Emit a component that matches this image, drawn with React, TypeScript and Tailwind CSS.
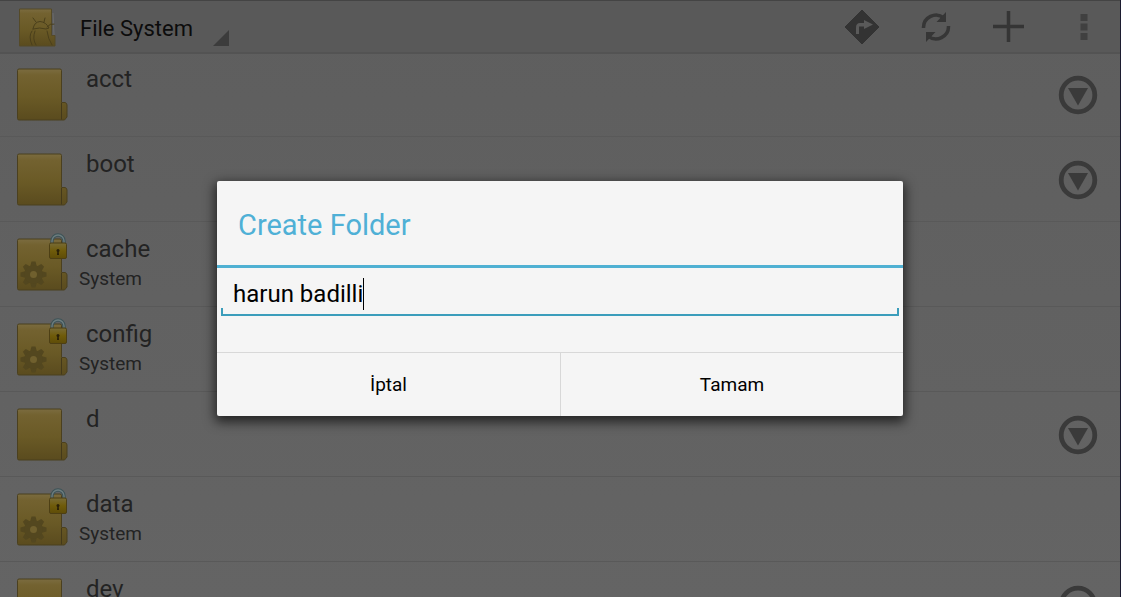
import { clsx } from "clsx";

type Folder = {
  name: string;
  system?: boolean;
};

const folders: Folder[] = [
  { name: "acct" },
  { name: "boot" },
  { name: "cache", system: true },
  { name: "config", system: true },
  { name: "d" },
  { name: "data", system: true },
  { name: "dev" },
];

const gearTeeth = [0, 45, 90, 135, 180, 225, 270, 315];

const Gear = () => (
  <g fill="#53471f">
    {gearTeeth.map((angle) => (
      <path key={angle} d="M14 31 L15.500 25.500 H19.500 L21 31 Z" transform={`rotate(${angle} 17.5 38.5)`} />
    ))}
    <circle cx="17.5" cy="38.5" r="9.200" />
    <circle cx="17.5" cy="38.5" r="3.500" fill="#70602e" />
  </g>
);

const Padlock = () => (
  <g transform="translate(0 1)">
    <path d="M36 10 V7 A6 6 0 0 1 48 7 V10" fill="none" stroke="#3d5357" strokeWidth="3.400" />
    <path d="M36 10 V7 A6 6 0 0 1 48 7 V10" fill="none" stroke="#6c7c7e" strokeWidth="1.400" />
    <rect x="33.500" y="9" width="17" height="15.500" rx="1.500" fill="url(#lockFill)" stroke="#4d3f14" />
    <circle cx="42" cy="16.500" r="1.500" fill="#2a2008" />
    <path d="M41.300 17 H42.700 L43 21 H41 Z" fill="#2a2008" />
  </g>
);

const FolderIcon = ({ system }: { system?: boolean }) => (
  <svg viewBox="0 0 52 60" className="h-15 w-13 shrink-0" aria-hidden="true">
    <defs>
      <linearGradient id="folderFill" x1="0" y1="0" x2="0" y2="1">
        <stop offset="0" stopColor="#7b6c40" />
        <stop offset="0.120" stopColor="#736230" />
        <stop offset="0.550" stopColor="#6a5a26" />
        <stop offset="1" stopColor="#5a4b1e" />
      </linearGradient>
      <linearGradient id="lockFill" x1="0" y1="0" x2="0" y2="1">
        <stop offset="0" stopColor="#786b36" />
        <stop offset="0.500" stopColor="#6f5b0a" />
        <stop offset="1" stopColor="#5e4c08" />
      </linearGradient>
    </defs>
    <g transform="translate(0 3)">
      <path
        d="M1.500 4.500 Q1.500 3 3 3 H44 Q45.500 3 45.500 4.500 V36.500 H49 Q51 37 51 39 V51 L48.500 54 H3 Q1.500 54 1.500 52.500 Z"
        fill="url(#folderFill)"
        stroke="#4b401f"
      />
      <path d="M45.500 37 V53.500" stroke="#43391a" fill="none" />
      {system && <Gear />}
    </g>
    {system && <Padlock />}
  </svg>
);

const AppIcon = () => (
  <svg viewBox="0 0 40 40" className="h-10 w-10 shrink-0" aria-hidden="true">
    <path d="M3.500 2 H35.500 V28.500 H39 V39 H3.500 Z" fill="url(#folderFill)" stroke="#554a28" />
    <path d="M37 6 L38 28" stroke="#6c6c6c" />
    <g fill="none" stroke="#4a3f1b" strokeLinecap="round">
      <path d="M17 22 Q18 15 24 14.500 Q30 15 33 21 L30 22 Q24 20 17 22 M20 15 L17 11 M28 15 L29 11" />
      <path d="M16 24 Q12 29 16 38 M19 24 Q16 32 20 38 M31 24 Q32 32 36 38 M31 20 Q34 16 38 17" />
    </g>
  </svg>
);

const DirectionsIcon = () => (
  <svg viewBox="0 0 36 36" className="h-9 w-9" aria-hidden="true">
    <path d="M18 1 L35 18 L18 35 L1 18 Z" fill="#333" stroke="#333" strokeLinejoin="round" />
    <path d="M12 25 V18.500 Q12 14 16 14 H20 V11 L29 15.500 L20 20 V17.500 H15 V25 Z" fill="#5a5a5a" />
  </svg>
);

const RefreshIcon = () => (
  <svg viewBox="0 0 32 32" className="h-8 w-8" aria-hidden="true">
    <g fill="none" stroke="#363636" strokeWidth="3.500">
      <path d="M3.500 17 A12.500 12.500 0 0 1 24 7" />
      <path d="M28.500 15 A12.500 12.500 0 0 1 8 25" />
    </g>
    <path d="M26 1 V11 H16.500 Z M6 31 V21 H15.500 Z" fill="#363636" />
  </svg>
);

const PlusIcon = () => (
  <svg viewBox="0 0 32 32" className="h-8 w-8" aria-hidden="true">
    <path d="M16.500 0 V31 M1 15.500 H32" stroke="#353535" strokeWidth="3.500" />
  </svg>
);

const MoreIcon = () => (
  <svg viewBox="0 0 8 28" className="h-7 w-2" aria-hidden="true">
    <path d="M0.500 1 H7.500 V8 H0.500 Z M0.500 10.500 H7.500 V17.500 H0.500 Z M0.500 20 H7.500 V27 H0.500 Z" fill="#404040" />
  </svg>
);

const ExpandIcon = () => (
  <svg viewBox="0 0 40 40" className="h-10 w-10" aria-hidden="true">
    <circle cx="20" cy="20" r="16.800" fill="none" stroke="#3a3a3a" strokeWidth="4.800" />
    <path d="M10 13 H30 L20 30.500 Z" fill="#3a3a3a" />
  </svg>
);

const Header = () => (
  <header className="relative flex h-13 items-center justify-between border-t border-[#444] bg-[#595959] px-4 shadow-[0_2px_0_#535353]">
    <button type="button" className="flex h-full items-center">
      <AppIcon />
      <span className="mt-1 ml-6 text-[22px] text-[#0c0c0c]">File System</span>
      <svg viewBox="0 0 16 16" className="mb-1.5 ml-5 h-4 w-4 self-end" aria-hidden="true">
        <path d="M16 0 V16 H0 Z" fill="#3c3c3c" />
      </svg>
    </button>
    <nav className="flex items-center gap-10">
      <button type="button" aria-label="Go to"><DirectionsIcon /></button>
      <button type="button" aria-label="Refresh"><RefreshIcon /></button>
      <button type="button" aria-label="New"><PlusIcon /></button>
      <button type="button" aria-label="More options" className="mx-4"><MoreIcon /></button>
    </nav>
  </header>
);

const FolderRow = ({ folder }: { folder: Folder }) => (
  <li className="flex h-[85px] border-b border-[#595959] pt-[11px] pr-[22px] pl-4">
    <FolderIcon system={folder.system} />
    <div className="ml-[11px] flex-1">
      <p className="pl-[7px] text-2xl leading-8 text-[#232323]">{folder.name}</p>
      {folder.system && <p className="text-[19px] leading-7 text-[#232323]">System</p>}
    </div>
    {!folder.system && (
      <button type="button" aria-label={`Open ${folder.name} menu`} className="mt-3 self-start">
        <ExpandIcon />
      </button>
    )}
  </li>
);

const dialogButtons = ["İptal", "Tamam"];

const CreateFolderDialog = () => (
  <div className="absolute inset-0 flex items-center justify-center px-4">
    <form
      role="dialog"
      aria-labelledby="dialog-title"
      className="w-full max-w-[686px] overflow-hidden rounded-xs bg-[#f5f5f5] shadow-[0_4px_12px_2px_rgba(0,0,0,0.65)]"
    >
      <h1
        id="dialog-title"
        className="border-b-3 border-[#4fb0d2] px-[21px] pt-[26px] pb-[22px] text-[29px] leading-9 text-[#4fb0d6]"
      >
        Create Folder
      </h1>
      <div className="px-1 pb-9">
        <div className="flex h-10 items-center pt-3 pl-3">
          <input
            type="text"
            aria-label="Folder name"
            defaultValue="harun badilli"
            className="field-sizing-content text-2xl text-black outline-none"
          />
          <span className="h-8 w-px bg-black" />
        </div>
        <div className="h-2 border-x-2 border-b-2 border-[#3b9dbb]" />
      </div>
      <div className="grid grid-cols-2 border-t border-[#d8d8d8]">
        {dialogButtons.map((label, index) => (
          <button
            key={label}
            type="button"
            className={clsx("h-[63px] pt-0.5 text-[19px] text-black", index > 0 && "border-l border-[#d8d8d8]")}
          >
            {label}
          </button>
        ))}
      </div>
    </form>
  </div>
);

const App = () => {
  return (
    <div className="relative h-screen overflow-hidden border-r border-[#1c1c30] bg-linear-to-b from-[#5e5e5e] to-[#646464] font-['Roboto',sans-serif]">
      <Header />
      <ul>
        {folders.map((folder) => (
          <FolderRow key={folder.name} folder={folder} />
        ))}
      </ul>
      <CreateFolderDialog />
    </div>
  );
};

export default App;
